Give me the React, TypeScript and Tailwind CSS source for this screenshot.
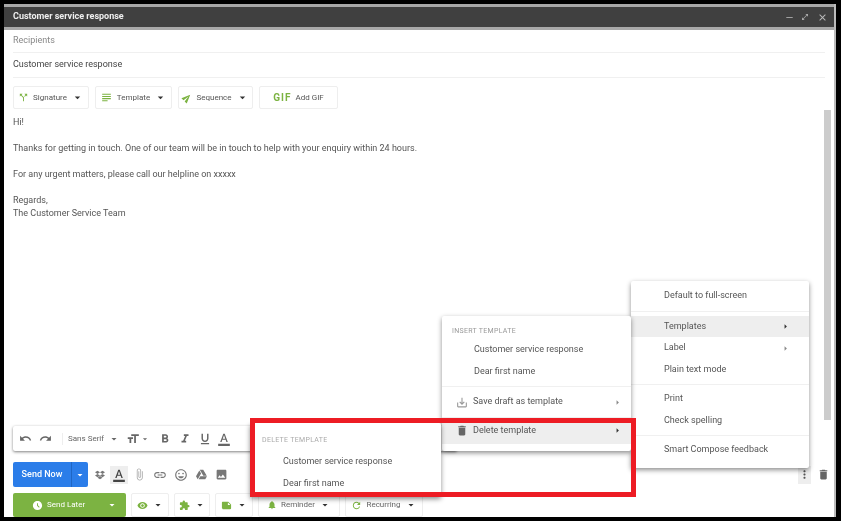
import {
  MdUndo,
  MdRedo,
  MdFormatBold,
  MdFormatItalic,
  MdFormatUnderlined,
  MdFormatColorText,
  MdFormatSize,
  MdAttachFile,
  MdInsertLink,
  MdInsertEmoticon,
  MdPhoto,
  MdMoreVert,
  MdDelete,
  MdSaveAlt,
  MdAccessTimeFilled,
  MdNotifications,
  MdRefresh,
  MdExtension,
  MdNote,
  MdRemoveRedEye,
  MdSend,
  MdArrowDropDown,
  MdArrowRight,
  MdClose,
  MdRemove,
  MdOpenInFull,
  MdSubject,
  MdCallSplit,
} from 'react-icons/md';
import { FaDropbox, FaGoogleDrive } from 'react-icons/fa';

function ToolButton({ icon, label, width }: { icon: React.ReactNode; label: string; width: string }) {
  return (
    <button className={`h-[23px] ${width} flex items-center justify-center gap-1 bg-white border border-[#eeeeee] rounded-[2px] text-[8px] text-[#555]`}>
      {icon}
      <span>{label}</span>
      <MdArrowDropDown className="text-[13px] text-[#333]" />
    </button>
  );
}

function SmallButton({ children, width }: { children: React.ReactNode; width: string }) {
  return (
    <div className={`h-[24px] ${width} flex items-center justify-center gap-1 border border-[#eeeeee] rounded-[2px] text-[8px] text-[#666]`}>
      {children}
      <MdArrowDropDown className="text-[12px] text-[#333]" />
    </div>
  );
}

export default function App() {
  return (
    <div className="w-[841px] h-[521px] bg-black pt-[4px] pl-[4px] pr-[5px] pb-[4px] overflow-hidden blur-[0.4px]" style={{ fontFamily: 'Roboto, sans-serif' }}>
      <div className="relative w-full h-full bg-white flex flex-col border-r-[2px] border-[#bbbbbb]">
        <div className="border-y-[3px] border-[#a8a8a8] h-[26px] bg-[#404040] flex items-center pl-[9px] pr-[6px] text-[9px] font-bold text-[#eeeeee] shrink-0">
          <span className="flex-1">Customer service response</span>
          <MdRemove className="text-[11px] text-[#aaa] mr-[6px]" />
          <MdOpenInFull className="text-[8px] text-[#aaa] mr-[8px]" />
          <MdClose className="text-[11px] text-[#bbb]" />
        </div>

        <div className="mx-[9px] h-[23px] flex items-center border-b border-[#f0f0f0] text-[9px] text-[#888] shrink-0">Recipients</div>
        <div className="mx-[9px] h-[25px] flex items-center border-b border-[#f0f0f0] text-[9px] text-[#444] shrink-0">Customer service response</div>

        <div className="flex gap-[6px] ml-[9px] mt-[8px] shrink-0">
          <ToolButton width="w-[76px]" label="Signature" icon={<MdCallSplit className="text-[11px] text-[#7cb342]" />} />
          <ToolButton width="w-[77px]" label="Template" icon={<MdSubject className="text-[13px] text-[#7cb342]" />} />
          <ToolButton width="w-[75px]" label="Sequence" icon={<MdSend className="text-[10px] text-[#7cb342] -rotate-45" />} />
          <div className="h-[23px] w-[79px] flex items-center justify-center gap-1 border border-[#eeeeee] rounded-[2px] text-[8px] text-[#555]">
            <span className="text-[10px] font-bold text-[#7cb342] tracking-[1px]">GIF</span>
            <span>Add GIF</span>
          </div>
        </div>

        <div className="flex flex-1 min-h-0">
          <div className="flex-1 pl-[9px] pt-[7px] text-[9px] leading-[13px] text-[#555]">
            <p>Hi!</p>
            <p className="mt-[13px]">Thanks for getting in touch. One of our team will be in touch to help with your enquiry within 24 hours.</p>
            <p className="mt-[13px]">For any urgent matters, please call our helpline on xxxxx</p>
            <p className="mt-[13px]">Regards,</p>
            <p>The Customer Service Team</p>
          </div>
          <div className="w-[7px] h-[310px] bg-[#cccccc] mr-[3px] mt-[1px]" />
        </div>

        <div className="ml-[9px] w-[444px] h-[25px] bg-white shadow-[0_1px_3px_rgba(0,0,0,0.5)] rounded-[2px] flex items-center pl-[6px] text-[#666] shrink-0 mb-[11px]">
          <MdUndo className="text-[13px]" />
          <MdRedo className="text-[13px] ml-[7px]" />
          <span className="text-[8px] ml-[10px] border-l border-[#eee] pl-[5px]">Sans Serif</span>
          <MdArrowDropDown className="text-[12px] ml-[4px]" />
          <MdFormatSize className="text-[14px] ml-[6px]" />
          <MdArrowDropDown className="text-[10px]" />
          <MdFormatBold className="text-[14px] ml-[8px]" />
          <MdFormatItalic className="text-[14px] ml-[6px]" />
          <MdFormatUnderlined className="text-[14px] ml-[6px]" />
          <MdFormatColorText className="text-[14px] ml-[5px]" />
        </div>

        <div className="flex items-center ml-[9px] h-[25px] shrink-0 mb-[6px] text-[#777]">
          <div className="w-[75px] h-[25px] bg-[#2b7de9] rounded-[2px] flex items-center text-white text-[9px] font-medium">
            <span className="w-[59px] text-center border-r border-[#1f66c4] leading-[25px]">Send Now</span>
            <MdArrowDropDown className="text-[12px] ml-[2px]" />
          </div>
          <FaDropbox className="text-[10px] ml-[7px]" />
          <div className="w-[18px] h-[18px] bg-[#eeeeee] ml-[5px] flex items-center justify-center text-[#444]">
            <MdFormatColorText className="text-[14px]" />
          </div>
          <MdAttachFile className="text-[13px] ml-[5px] text-[#aaa]" />
          <MdInsertLink className="text-[14px] ml-[7px]" />
          <MdInsertEmoticon className="text-[14px] ml-[7px]" />
          <FaGoogleDrive className="text-[11px] ml-[8px]" />
          <MdPhoto className="text-[13px] ml-[8px]" />
          <div className="flex-1" />
          <div className="w-[13px] h-[18px] bg-[#eeeeee] flex items-center justify-center mr-[6px]">
            <MdMoreVert className="text-[13px] text-[#555]" />
          </div>
          <MdDelete className="text-[13px] text-[#666] mr-[4px]" />
        </div>

        <div className="flex gap-[5px] ml-[9px] h-[24px] shrink-0">
          <div className="w-[113px] h-[24px] bg-[#7cb342] rounded-[2px] flex items-center text-white text-[8px]">
            <MdAccessTimeFilled className="text-[11px] ml-[19px]" />
            <span className="ml-[4px]">Send Later</span>
            <MdArrowDropDown className="text-[12px] ml-[21px]" />
          </div>
          <SmallButton width="w-[38px]"><MdRemoveRedEye className="text-[11px] text-[#7cb342]" /></SmallButton>
          <SmallButton width="w-[36px]"><MdExtension className="text-[11px] text-[#7cb342]" /></SmallButton>
          <SmallButton width="w-[38px]"><MdNote className="text-[11px] text-[#7cb342]" /></SmallButton>
          <SmallButton width="w-[82px]"><MdNotifications className="text-[10px] text-[#7cb342]" />Reminder</SmallButton>
          <SmallButton width="w-[78px]"><MdRefresh className="text-[11px] text-[#7cb342]" />Recurring</SmallButton>
        </div>

        {/* compose menu */}
        <div className="absolute left-[627px] top-[277px] w-[178px] h-[187px] bg-white rounded-[2px] shadow-[0_2px_5px_rgba(0,0,0,0.45)] text-[9px] text-[#555] flex flex-col pt-[4px] z-10">
          <div className="h-[22px] flex items-center pl-[33px]">Default to full-screen</div>
          <div className="h-px bg-[#f0f0f0] my-[4px]" />
          <div className="h-[21px] flex items-center pl-[33px] pr-[18px] justify-between bg-[#eeeeee]">Templates<MdArrowRight className="text-[11px] text-[#333]" /></div>
          <div className="h-[22px] flex items-center pl-[33px] pr-[18px] justify-between">Label<MdArrowRight className="text-[11px] text-[#888]" /></div>
          <div className="h-[22px] flex items-center pl-[33px]">Plain text mode</div>
          <div className="h-px bg-[#f0f0f0] my-[3px]" />
          <div className="h-[22px] flex items-center pl-[33px]">Print</div>
          <div className="h-[22px] flex items-center pl-[33px]">Check spelling</div>
          <div className="h-px bg-[#f0f0f0] my-[3px]" />
          <div className="h-[22px] flex items-center pl-[33px]">Smart Compose feedback</div>
        </div>

        {/* templates submenu */}
        <div className="absolute left-[438px] top-[312px] w-[189px] h-[135px] bg-white rounded-[2px] shadow-[0_2px_5px_rgba(0,0,0,0.45)] text-[9px] text-[#555] flex flex-col pt-[7px] z-20">
          <div className="h-[16px] flex items-center pl-[10px] text-[7px] text-[#999] tracking-[0.3px]">INSERT TEMPLATE</div>
          <div className="h-[22px] flex items-center pl-[32px]">Customer service response</div>
          <div className="h-[22px] flex items-center pl-[32px]">Dear first name</div>
          <div className="h-px bg-[#f0f0f0] mt-[3px]" />
          <div className="h-[30px] flex items-center pl-[10px] pr-[8px]">
            <MdSaveAlt className="text-[13px] text-[#999] w-[22px] -ml-[1px]" />
            <span className="flex-1">Save draft as template</span>
            <MdArrowRight className="text-[11px] text-[#888]" />
          </div>
          <div className="h-[27px] flex items-center pl-[10px] pr-[8px] bg-[#eeeeee]">
            <MdDelete className="text-[13px] text-[#666] w-[22px] -ml-[1px]" />
            <span className="flex-1">Delete template</span>
            <MdArrowRight className="text-[11px] text-[#333]" />
          </div>
        </div>

        {/* delete template submenu */}
        <div className="absolute left-[246px] top-[419px] w-[191px] h-[74px] bg-white rounded-[2px] shadow-[0_2px_5px_rgba(0,0,0,0.45)] text-[9px] text-[#555] flex flex-col pt-[9px] z-30">
          <div className="h-[16px] flex items-center pl-[12px] text-[7px] text-[#aaa] tracking-[0.3px]">DELETE TEMPLATE</div>
          <div className="h-[22px] flex items-center pl-[33px] mt-[3px]">Customer service response</div>
          <div className="h-[21px] flex items-center pl-[33px]">Dear first name</div>
        </div>

        {/* red highlight */}
        <div className="absolute left-[246px] top-[414px] w-[386px] h-[79px] border-[5px] border-[#ed1c24] z-40 pointer-events-none" />
      </div>
    </div>
  );
}
